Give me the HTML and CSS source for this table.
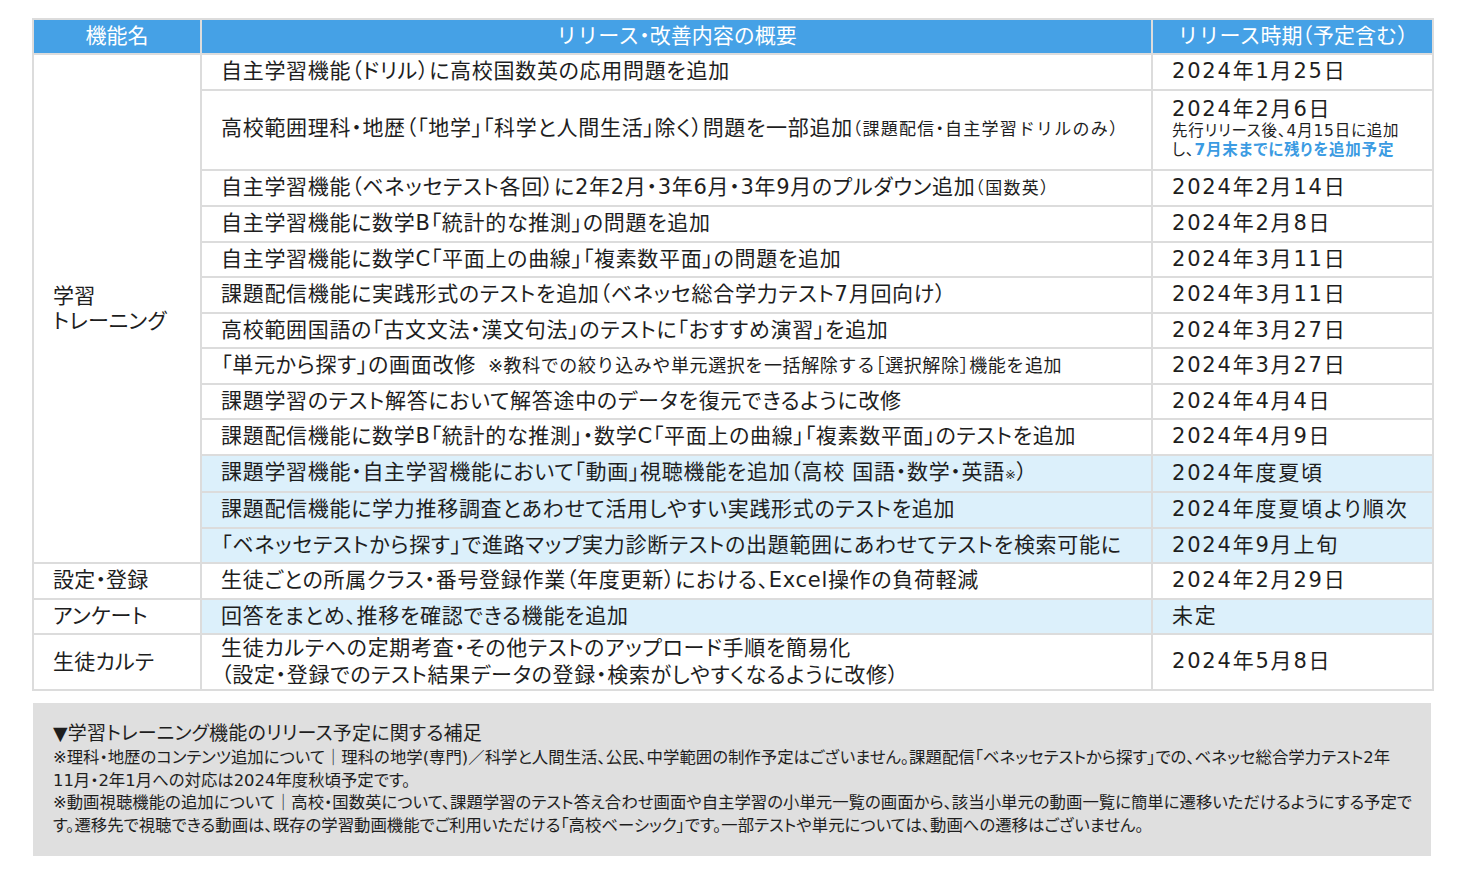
FILE: index.html
```html
<!DOCTYPE html>
<html lang="ja">
<head>
<meta charset="utf-8">
<title>リリース予定</title>
<link rel="stylesheet" href="styles.css">
</head>
<body>
<div class="page">
  <table class="release">
    <colgroup>
      <col class="c1">
      <col class="c2">
      <col class="c3">
    </colgroup>
    <thead>
      <tr>
        <th>機能名</th>
        <th>リリース・改善内容の概要</th>
        <th>リリース時期（予定含む）</th>
      </tr>
    </thead>
    <tbody>
      <tr>
        <td class="cat" rowspan="13">学習<br>トレーニング</td>
        <td>自主学習機能（ドリル）に高校国数英の応用問題を追加</td>
        <td class="date">2024年1月25日</td>
      </tr>
      <tr class="tall">
        <td>高校範囲理科・地歴（「地学」「科学と人間生活」除く）問題を一部追加<span class="small">（課題配信・自主学習ドリルのみ）</span></td>
        <td class="date">
          <div class="date-main">2024年2月6日</div>
          <div class="date-note">先行リリース後、4月15日に追加<br>し、<span class="accent">7月末までに残りを追加予定</span></div>
        </td>
      </tr>
      <tr>
        <td>自主学習機能（ベネッセテスト各回）に2年2月・3年6月・3年9月のプルダウン追加<span class="small">（国数英）</span></td>
        <td class="date">2024年2月14日</td>
      </tr>
      <tr>
        <td>自主学習機能に数学B「統計的な推測」の問題を追加</td>
        <td class="date">2024年2月8日</td>
      </tr>
      <tr>
        <td>自主学習機能に数学C「平面上の曲線」「複素数平面」の問題を追加</td>
        <td class="date">2024年3月11日</td>
      </tr>
      <tr>
        <td>課題配信機能に実践形式のテストを追加（ベネッセ総合学力テスト7月回向け）</td>
        <td class="date">2024年3月11日</td>
      </tr>
      <tr>
        <td>高校範囲国語の「古文文法・漢文句法」のテストに「おすすめ演習」を追加</td>
        <td class="date">2024年3月27日</td>
      </tr>
      <tr>
        <td>「単元から探す」の画面改修<span class="note-inline">※教科での絞り込みや単元選択を一括解除する［選択解除］機能を追加</span></td>
        <td class="date">2024年3月27日</td>
      </tr>
      <tr>
        <td>課題学習のテスト解答において解答途中のデータを復元できるように改修</td>
        <td class="date">2024年4月4日</td>
      </tr>
      <tr>
        <td>課題配信機能に数学B「統計的な推測」・数学C「平面上の曲線」「複素数平面」のテストを追加</td>
        <td class="date">2024年4月9日</td>
      </tr>
      <tr class="hl">
        <td>課題学習機能・自主学習機能において「動画」視聴機能を追加（高校 国語・数学・英語<span class="kome">※</span>）</td>
        <td class="date">2024年度夏頃</td>
      </tr>
      <tr class="hl">
        <td>課題配信機能に学力推移調査とあわせて活用しやすい実践形式のテストを追加</td>
        <td class="date">2024年度夏頃より順次</td>
      </tr>
      <tr class="hl">
        <td>「ベネッセテストから探す」で進路マップ実力診断テストの出題範囲にあわせてテストを検索可能に</td>
        <td class="date">2024年9月上旬</td>
      </tr>
      <tr>
        <td class="cat">設定・登録</td>
        <td>生徒ごとの所属クラス・番号登録作業（年度更新）における、Excel操作の負荷軽減</td>
        <td class="date">2024年2月29日</td>
      </tr>
      <tr class="hl">
        <td class="cat plain">アンケート</td>
        <td>回答をまとめ、推移を確認できる機能を追加</td>
        <td class="date">未定</td>
      </tr>
      <tr class="two">
        <td class="cat">生徒カルテ</td>
        <td class="multi">生徒カルテへの定期考査・その他テストのアップロード手順を簡易化<br>（設定・登録でのテスト結果データの登録・検索がしやすくなるように改修）</td>
        <td class="date">2024年5月8日</td>
      </tr>
    </tbody>
  </table>

  <div class="notes">
    <p class="notes-title">▼学習トレーニング機能のリリース予定に関する補足</p>
    <p class="notes-text">※理科・地歴のコンテンツ追加について｜理科の地学(専門)／科学と人間生活、公民、中学範囲の制作予定はございません。課題配信「ベネッセテストから探す」での、ベネッセ総合学力テスト2年<br>11月・2年1月への対応は2024年度秋頃予定です。</p>
    <p class="notes-text">※動画視聴機能の追加について｜高校・国数英について、課題学習のテスト答え合わせ画面や自主学習の小単元一覧の画面から、該当小単元の動画一覧に簡単に遷移いただけるようにする予定で<br>す。遷移先で視聴できる動画は、既存の学習動画機能でご利用いただける「高校ベーシック」です。一部テストや単元については、動画への遷移はございません。</p>
  </div>
</div>
</body>
</html>
```

FILE: styles.css
```css
html, body {
  margin: 0;
  padding: 0;
  background: #ffffff;
}

body {
  font-family: "DejaVu Sans", "Noto Sans CJK JP", sans-serif;
  font-feature-settings: "palt";
  color: #1e1e1e;
}

.page {
  padding: 18px 0 0 32px;
  width: 1400px;
}

.release {
  width: 1400px;
  table-layout: fixed;
  border-collapse: collapse;
  border: 2px solid #dcdcdc;
}

.c1 { width: 168px; }
.c2 { width: 951px; }
.c3 { width: 281px; }

.release th {
  background: #45a1e6;
  color: #ffffff;
  font-weight: normal;
  font-size: 21px;
  font-feature-settings: "halt";
  height: 33px;
  line-height: 33px;
  padding: 0;
  border: 2px solid #dcdcdc;
  text-align: center;
  white-space: nowrap;
}

.release td {
  border: 2px solid #dcdcdc;
  padding: 0 0 0 19px;
  font-size: 21px;
  letter-spacing: 0.7px;
  line-height: 33.5px;
  height: 33.5px;
  vertical-align: middle;
  white-space: nowrap;
}

.release tr.hl td {
  background: #dcf0fb;
}

.release tr.hl td.plain {
  background: #ffffff;
}

.release td.cat {
  line-height: 25px;
  letter-spacing: 0.2px;
  background: #ffffff;
}

.release td.date {
  letter-spacing: 1.8px;
}

.release tr.tall td {
  height: 78px;
}

.release tr.two td {
  height: 54px;
}

.release td.multi {
  line-height: 27px;
}

.small {
  font-size: 17px;
  font-feature-settings: "halt";
  letter-spacing: 1.2px;
}

.note-inline {
  font-size: 18px;
  font-feature-settings: "halt";
  letter-spacing: 0.6px;
  margin-left: 12px;
}

.kome {
  font-size: 13px;
}

.date-main {
  line-height: 26px;
}

.date-note {
  font-size: 15.5px;
  line-height: 19px;
  letter-spacing: 0.8px;
  padding-bottom: 3px;
}

.accent {
  color: #3b9be2;
  font-weight: bold;
}

.notes {
  margin-top: 12px;
  margin-left: 1px;
  width: 1358px;
  background: #dfdfdf;
  padding: 17px 20px 19px 20px;
}

.notes p {
  margin: 0;
}

.notes-title {
  font-size: 19px;
  letter-spacing: 0.2px;
  line-height: 27px;
}

.notes-text {
  font-size: 16.4px;
  line-height: 22.5px;
  white-space: nowrap;
}
```
